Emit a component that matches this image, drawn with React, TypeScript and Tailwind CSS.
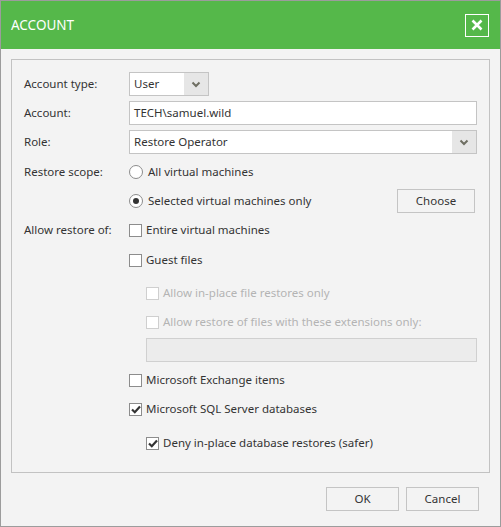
import { ReactNode } from 'react';

const font = { fontFamily: '"Noto Sans", "Open Sans", sans-serif' };

function Chevron() {
    return (
        <svg width="10" height="7" viewBox="0 0 10 7">
            <path d="M1.5 1.5 L5 5 L8.5 1.5" fill="none" stroke="#6e6e62" strokeWidth="2" />
        </svg>
    );
}

function Select({ value, className }: { value: string; className: string }) {
    return (
        <div className={`flex h-6 items-stretch border border-[#c4c4c4] bg-white ${className}`}>
            <span className="flex-1 pl-[4px] leading-[22px] text-[#333]">{value}</span>
            <span className="flex w-6 items-center justify-center bg-[#e6e6e6]">
                <Chevron />
            </span>
        </div>
    );
}

function Radio({ checked, children }: { checked?: boolean; children: ReactNode }) {
    return (
        <div className="flex h-6 items-center gap-[5px]">
            <span className="flex h-[14px] w-[14px] items-center justify-center rounded-full border border-[#8c8c8c] bg-white">
                {checked && <span className="h-[6px] w-[6px] rounded-full bg-[#333]" />}
            </span>
            <span className="text-[#333]">{children}</span>
        </div>
    );
}

function Check({ checked, disabled, children }: { checked?: boolean; disabled?: boolean; children: ReactNode }) {
    return (
        <div className="flex h-6 items-center gap-[4px]">
            <span
                className={`flex h-[13px] w-[13px] items-center justify-center border bg-white ${
                    disabled ? 'border-[#cfcfcf]' : 'border-[#8c8c8c]'
                }`}
            >
                {checked && (
                    <svg width="10" height="9" viewBox="0 0 10 9">
                        <path d="M1 4.5 L3.8 7.2 L9 1.5" fill="none" stroke="#333" strokeWidth="2.2" />
                    </svg>
                )}
            </span>
            <span className={disabled ? 'text-[#b4b4b4]' : 'text-[#333]'}>{children}</span>
        </div>
    );
}

function Label({ children }: { children: ReactNode }) {
    return <span className="w-[105px] shrink-0 leading-6 text-[#333]">{children}</span>;
}

export default function App() {
    return (
        <div style={font} className="flex h-[527px] w-[501px] flex-col border border-[#9c9c9c] bg-[#f3f3f3] text-[11.5px]">
            <div className="flex h-[48px] items-center justify-between bg-[#55b84a] pl-[10px] pr-[11px]">
                <span className="text-[13.5px] text-white">ACCOUNT</span>
                <button className="flex h-[23px] w-[24px] items-center justify-center border border-white">
                    <svg width="12" height="12" viewBox="0 0 12 12">
                        <path d="M1.5 1.5 L10.5 10.5 M10.5 1.5 L1.5 10.5" stroke="white" strokeWidth="2.6" />
                    </svg>
                </button>
            </div>

            <div className="mx-[10px] mt-[10px] flex flex-col border border-[#c2c2c2] px-[12px] pb-[17px] pt-[12px]">
                <div className="flex">
                    <Label>Account type:</Label>
                    <Select value="User" className="w-[80px]" />
                </div>
                <div className="mt-[5px] flex">
                    <Label>Account:</Label>
                    <div className="h-6 flex-1 border border-[#c4c4c4] bg-white pl-[4px] leading-[22px] text-[#333]">
                        TECH\samuel.wild
                    </div>
                </div>
                <div className="mt-[5px] flex">
                    <Label>Role:</Label>
                    <Select value="Restore Operator" className="flex-1" />
                </div>
                <div className="mt-[6px] flex">
                    <Label>Restore scope:</Label>
                    <div className="flex flex-1 flex-col gap-[5px]">
                        <Radio>All virtual machines</Radio>
                        <div className="flex items-center justify-between">
                            <Radio checked>Selected virtual machines only</Radio>
                            <button className="mr-[2px] h-[24px] w-[78px] border border-[#c4c4c4] text-[#333]">Choose</button>
                        </div>
                    </div>
                </div>
                <div className="mt-[5px] flex">
                    <Label>Allow restore of:</Label>
                    <div className="flex flex-1 flex-col">
                        <Check>Entire virtual machines</Check>
                        <div className="mt-[6px]">
                            <Check>Guest files</Check>
                        </div>
                        <div className="ml-[17px] mt-[9px] flex flex-col">
                            <Check disabled>Allow in-place file restores only</Check>
                            <div className="mt-[5px]">
                                <Check disabled>Allow restore of files with these extensions only:</Check>
                            </div>
                            <div className="mt-[4px] h-6 border border-[#d0d0d0] bg-[#ececec]" />
                        </div>
                        <div className="mt-[6px]">
                            <Check>Microsoft Exchange items</Check>
                        </div>
                        <div className="mt-[5px]">
                            <Check checked>Microsoft SQL Server databases</Check>
                        </div>
                        <div className="ml-[17px] mt-[10px]">
                            <Check checked>Deny in-place database restores (safer)</Check>
                        </div>
                    </div>
                </div>
            </div>

            <div className="mr-[21px] mt-[14px] flex justify-end gap-[7px]">
                <button className="h-[24px] w-[73px] border border-[#c4c4c4] text-[#333]">OK</button>
                <button className="h-[24px] w-[73px] border border-[#c4c4c4] text-[#333]">Cancel</button>
            </div>
        </div>
    );
}
